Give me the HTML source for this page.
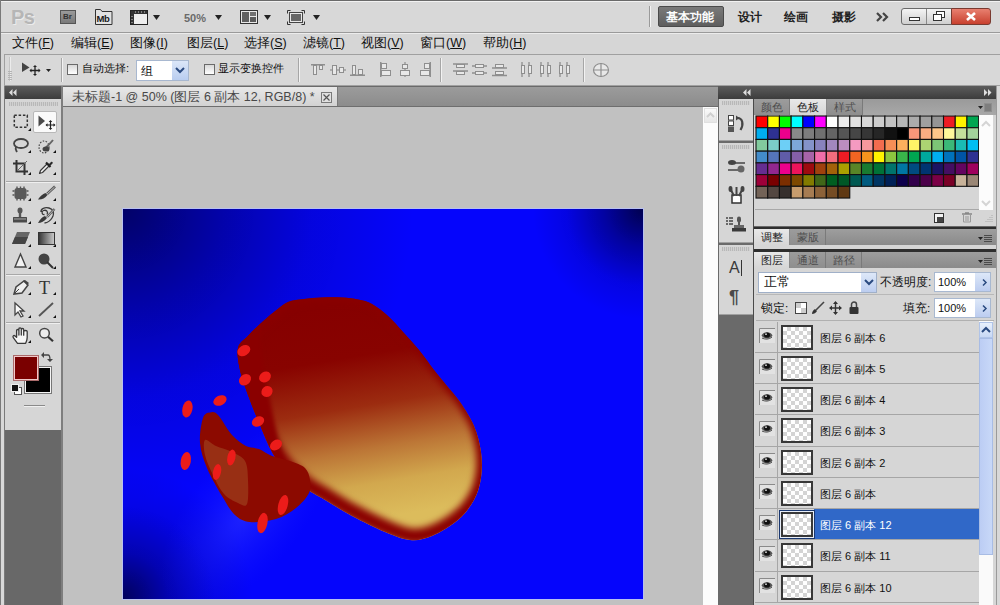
<!DOCTYPE html>
<html><head><meta charset="utf-8">
<style>
*{box-sizing:border-box}
html,body{margin:0;padding:0;width:1000px;height:605px;overflow:hidden;background:#d6d6d6;font-family:"Liberation Sans",sans-serif;font-size:12px;color:#1a1a1a}
.a{position:absolute}
.t{position:absolute;white-space:nowrap;line-height:1}
.hdr{background:linear-gradient(#5c5c5c,#3c3c3c)}
.grip{position:absolute;height:4px;background:repeating-linear-gradient(90deg,#b8b8b8 0 1px,#d0d0d0 1px 2px)}
.tri{position:absolute;width:0;height:0;border-left:3px solid transparent;border-bottom:3px solid #111}
svg{position:absolute;overflow:visible}
</style></head><body>

<div class="a" style="left:0;top:0;width:1000px;height:1px;background:#6a6a6a"></div>
<div class="a" style="left:0;top:0;width:1px;height:605px;background:#7a7a7a"></div>
<div class="a" style="left:1px;top:1px;width:999px;height:1px;background:#f2f2f2"></div>
<div class="a" style="left:1px;top:2px;width:999px;height:30px;background:#d8d8d8"></div>
<div class="a" style="left:1px;top:32px;width:999px;height:1px;background:#9a9a9a"></div>
<div class="a" style="left:1px;top:33px;width:999px;height:1px;background:#ececec"></div>
<div class="t" style="left:11px;top:7px;font-size:20px;font-weight:bold;color:#b6b6b6;letter-spacing:-0.5px;text-shadow:1px 1px 0 #ececec">Ps</div>
<div class="a" style="left:60px;top:10px;width:16px;height:14px;background:linear-gradient(#9a9a9a,#7a7a7a);border:1px solid #555"></div>
<div class="t" style="left:63px;top:13px;font-size:8px;font-weight:bold;color:#333">Br</div>
<svg style="left:95px;top:9px" width="18" height="16"><path d="M0.5 0.5 h5 l1.5 2 h10 v13 h-16.5 z" fill="#e2e2e2" stroke="#333"/></svg>
<div class="t" style="left:96.5px;top:14px;font-size:9.5px;font-weight:bold;color:#1a1a1a;letter-spacing:-0.3px">Mb</div>
<svg style="left:130px;top:10px" width="18" height="15"><rect x="0.5" y="0.5" width="17" height="14" fill="#eee" stroke="#222"/><rect x="1" y="1" width="16" height="3" fill="#333"/><rect x="1" y="1" width="3" height="13" fill="#333"/><path d="M5 2h1M8 2h1M11 2h1M14 2h1M2 6v1M2 9v1M2 12v1" stroke="#ccc"/></svg>
<svg style="left:153px;top:15px" width="8" height="5"><path d="M0 0h7l-3.5 5z" fill="#222"/></svg>
<div class="t" style="left:184px;top:13px;font-size:11px;font-weight:bold;color:#6a6a6a">50%</div>
<svg style="left:215px;top:15px" width="8" height="5"><path d="M0 0h7l-3.5 5z" fill="#222"/></svg>
<svg style="left:240px;top:10px" width="18" height="14"><rect x="0.5" y="0.5" width="17" height="13" fill="#e8e8e8" stroke="#333"/><rect x="2" y="2" width="7" height="10" fill="#606060"/><rect x="10" y="2" width="6" height="4" fill="#707070"/><rect x="10" y="7" width="6" height="5" fill="#5a5a5a"/></svg>
<svg style="left:264px;top:15px" width="8" height="5"><path d="M0 0h7l-3.5 5z" fill="#222"/></svg>
<svg style="left:287px;top:10px" width="18" height="15"><rect x="2.5" y="2.5" width="13" height="10" fill="#e8e8e8" stroke="#444"/><rect x="4" y="4" width="10" height="7" fill="#666"/><path d="M0.5 3.5v-3h3M14.5 0.5h3v3M17.5 11.5v3h-3M3.5 14.5h-3v-3" stroke="#333" fill="none"/></svg>
<svg style="left:313px;top:15px" width="8" height="5"><path d="M0 0h7l-3.5 5z" fill="#222"/></svg>
<div class="a" style="left:649px;top:6px;width:1px;height:21px;background:#9a9a9a"></div>
<div class="a" style="left:650px;top:6px;width:1px;height:21px;background:#f4f4f4"></div>
<div class="a" style="left:658px;top:6px;width:66px;height:21px;background:linear-gradient(#7a7a7a,#5e5e5e);border:1px solid #4a4a4a;border-radius:2px"></div>
<div class="t" style="left:666px;top:11px;font-size:12px;font-weight:bold;color:#fff">基本功能</div>
<div class="t" style="left:738px;top:11px;font-size:12px;font-weight:bold;color:#222">设计</div>
<div class="t" style="left:784px;top:11px;font-size:12px;font-weight:bold;color:#222">绘画</div>
<div class="t" style="left:832px;top:11px;font-size:12px;font-weight:bold;color:#222">摄影</div>
<svg style="left:876px;top:12px" width="14" height="10"><path d="M1 1l4 4l-4 4M7 1l4 4l-4 4" stroke="#444" stroke-width="2.2" fill="none"/></svg>
<div class="a" style="left:901px;top:8px;width:51px;height:17px;background:linear-gradient(#f4f4f4,#cfcfcf);border:1px solid #6a6a6a;border-radius:3px 0 0 3px"></div>
<div class="a" style="left:926px;top:9px;width:1px;height:15px;background:#8a8a8a"></div>
<div class="a" style="left:909px;top:17px;width:11px;height:4px;border:1px solid #333;background:#fff"></div>
<svg style="left:932px;top:10px" width="14" height="12"><rect x="4.5" y="1.5" width="8" height="6" fill="#fff" stroke="#333"/><rect x="1.5" y="4.5" width="8" height="6" fill="#fff" stroke="#333"/></svg>
<div class="a" style="left:951px;top:8px;width:40px;height:17px;background:linear-gradient(#e88070,#c8402e);border:1px solid #7a3a30;border-radius:0 3px 3px 0"></div>
<svg style="left:965px;top:11px" width="12" height="11"><path d="M2 2l8 7M10 2l-8 7" stroke="#fff" stroke-width="2.6"/></svg>
<div class="t" style="left:12px;top:37px;font-size:12.5px;color:#111">文件(<span style="text-decoration:underline">F</span>)</div>
<div class="t" style="left:71px;top:37px;font-size:12.5px;color:#111">编辑(<span style="text-decoration:underline">E</span>)</div>
<div class="t" style="left:130px;top:37px;font-size:12.5px;color:#111">图像(<span style="text-decoration:underline">I</span>)</div>
<div class="t" style="left:187px;top:37px;font-size:12.5px;color:#111">图层(<span style="text-decoration:underline">L</span>)</div>
<div class="t" style="left:244px;top:37px;font-size:12.5px;color:#111">选择(<span style="text-decoration:underline">S</span>)</div>
<div class="t" style="left:303px;top:37px;font-size:12.5px;color:#111">滤镜(<span style="text-decoration:underline">T</span>)</div>
<div class="t" style="left:361px;top:37px;font-size:12.5px;color:#111">视图(<span style="text-decoration:underline">V</span>)</div>
<div class="t" style="left:420px;top:37px;font-size:12.5px;color:#111">窗口(<span style="text-decoration:underline">W</span>)</div>
<div class="t" style="left:483px;top:37px;font-size:12.5px;color:#111">帮助(<span style="text-decoration:underline">H</span>)</div>
<div class="a" style="left:4px;top:54px;width:996px;height:32px;background:#d8d8d8;border:1px solid #a0a0a0;border-right:none"></div>
<div class="a" style="left:9px;top:57px;width:1px;height:24px;background:#c4c4c4"></div><div class="a" style="left:10px;top:57px;width:1px;height:24px;background:#ececec"></div>
<div class="a" style="left:8px;top:71px;width:4px;height:9px;background:repeating-linear-gradient(#b4b4b4 0 1px,transparent 1px 2px)"></div>
<svg style="left:22px;top:62px" width="20" height="15"><path d="M0 0.5v9.5l7.5-4.5z" fill="#444"/><path d="M8.5 8.5h9M13 4v9" stroke="#222" stroke-width="1.3"/><path d="M13 3l-2 2h4zM13 14l-2-2h4zM7.5 8.5l2-2v4zM18.5 8.5l-2-2v4z" fill="#222"/></svg>
<svg style="left:46px;top:69px" width="6" height="4"><path d="M0 0h5l-2.5 3z" fill="#222"/></svg>
<div class="a" style="left:61px;top:58px;width:1px;height:24px;background:#a6a6a6"></div>
<div class="a" style="left:62px;top:58px;width:1px;height:24px;background:#f2f2f2"></div>
<div class="a" style="left:298px;top:58px;width:1px;height:24px;background:#a6a6a6"></div>
<div class="a" style="left:299px;top:58px;width:1px;height:24px;background:#f2f2f2"></div>
<div class="a" style="left:440px;top:58px;width:1px;height:24px;background:#a6a6a6"></div>
<div class="a" style="left:441px;top:58px;width:1px;height:24px;background:#f2f2f2"></div>
<div class="a" style="left:583px;top:58px;width:1px;height:24px;background:#a6a6a6"></div>
<div class="a" style="left:584px;top:58px;width:1px;height:24px;background:#f2f2f2"></div>
<div class="a" style="left:67px;top:64px;width:11px;height:11px;border:1px solid #6a6a6a;background:linear-gradient(#d8d8d8,#fff)"></div>
<div class="t" style="left:82px;top:63px;font-size:11.2px;color:#111">自动选择:</div>
<div class="a" style="left:136px;top:60px;width:53px;height:21px;background:#fff;border:1px solid #a8b8d0"></div>
<div class="t" style="left:141px;top:65px;font-size:12px;color:#111">组</div>
<div class="a" style="left:172px;top:61px;width:16px;height:19px;background:linear-gradient(#dbe6f8,#b9cdf0)"></div>
<svg style="left:175px;top:67px" width="10" height="7"><path d="M1 1l4 4l4-4" stroke="#2a4a80" stroke-width="2" fill="none"/></svg>
<div class="a" style="left:204px;top:64px;width:11px;height:11px;border:1px solid #6a6a6a;background:linear-gradient(#d8d8d8,#fff)"></div>
<div class="t" style="left:218px;top:63px;font-size:11.2px;color:#111">显示变换控件</div>
<svg style="left:311px;top:64px" width="16" height="12"><path d="M0 0.75h14" stroke="#8e8e8e" stroke-width="1.5"/><rect x="2.5" y="1.5" width="3" height="9" fill="#e8e8e8" stroke="#8e8e8e"/><rect x="8.5" y="1.5" width="3" height="4" fill="#e8e8e8" stroke="#8e8e8e"/></svg>
<svg style="left:330px;top:64px" width="16" height="12"><path d="M0 6h16" stroke="#8e8e8e" stroke-width="1.2"/><rect x="2.5" y="1.5" width="4" height="9" fill="#e8e8e8" stroke="#8e8e8e"/><rect x="9.5" y="3.5" width="4" height="5" fill="#e8e8e8" stroke="#8e8e8e"/></svg>
<svg style="left:350px;top:64px" width="16" height="12"><path d="M0 11.25h15" stroke="#8e8e8e" stroke-width="1.5"/><rect x="2.5" y="1.5" width="3" height="9" fill="#e8e8e8" stroke="#8e8e8e"/><rect x="8.5" y="5.5" width="4" height="5" fill="#e8e8e8" stroke="#8e8e8e"/></svg>
<svg style="left:380px;top:62px" width="12" height="15"><path d="M0.75 0v15" stroke="#8e8e8e" stroke-width="1.5"/><rect x="1.5" y="1.5" width="5" height="5" fill="#e8e8e8" stroke="#8e8e8e"/><rect x="1.5" y="8.5" width="9" height="5" fill="#e8e8e8" stroke="#8e8e8e"/></svg>
<svg style="left:399px;top:62px" width="12" height="15"><path d="M6 0v15" stroke="#8e8e8e" stroke-width="1.2"/><rect x="3.5" y="2.5" width="5" height="4" fill="#e8e8e8" stroke="#8e8e8e"/><rect x="1.5" y="8.5" width="9" height="5" fill="#e8e8e8" stroke="#8e8e8e"/></svg>
<svg style="left:419px;top:62px" width="12" height="15"><path d="M11.25 0v15" stroke="#8e8e8e" stroke-width="1.5"/><rect x="5.5" y="1.5" width="5" height="5" fill="#e8e8e8" stroke="#8e8e8e"/><rect x="1.5" y="8.5" width="9" height="5" fill="#e8e8e8" stroke="#8e8e8e"/></svg>
<svg style="left:453px;top:63px" width="16" height="14"><path d="M0 1h15M0 8h15" stroke="#8e8e8e" stroke-width="1.3"/><rect x="3.5" y="1.5" width="8" height="3" fill="#e8e8e8" stroke="#8e8e8e"/><rect x="3.5" y="8.5" width="8" height="3" fill="#e8e8e8" stroke="#8e8e8e"/></svg>
<svg style="left:472px;top:63px" width="16" height="14"><path d="M0 3h15M0 10h15" stroke="#8e8e8e" stroke-width="1.3"/><rect x="3.5" y="1.5" width="8" height="3" fill="#e8e8e8" stroke="#8e8e8e"/><rect x="3.5" y="8.5" width="8" height="3" fill="#e8e8e8" stroke="#8e8e8e"/></svg>
<svg style="left:492px;top:63px" width="16" height="14"><path d="M0 5h15M0 12.5h15" stroke="#8e8e8e" stroke-width="1.3"/><rect x="3.5" y="1.5" width="8" height="3" fill="#e8e8e8" stroke="#8e8e8e"/><rect x="3.5" y="8.5" width="8" height="3" fill="#e8e8e8" stroke="#8e8e8e"/></svg>
<svg style="left:520px;top:62px" width="14" height="16"><path d="M2 0v15M9 0v15" stroke="#8e8e8e" stroke-width="1.3"/><rect x="1.5" y="3.5" width="3" height="8" fill="#e8e8e8" stroke="#8e8e8e"/><rect x="8.5" y="3.5" width="3" height="8" fill="#e8e8e8" stroke="#8e8e8e"/></svg>
<svg style="left:539px;top:62px" width="14" height="16"><path d="M2 0v15M9 0v15" stroke="#8e8e8e" stroke-width="1.3"/><rect x="1.5" y="3.5" width="3" height="8" fill="#e8e8e8" stroke="#8e8e8e"/><rect x="8.5" y="3.5" width="3" height="8" fill="#e8e8e8" stroke="#8e8e8e"/></svg>
<svg style="left:558px;top:62px" width="14" height="16"><path d="M2 0v15M9 0v15" stroke="#8e8e8e" stroke-width="1.3"/><rect x="1.5" y="3.5" width="3" height="8" fill="#e8e8e8" stroke="#8e8e8e"/><rect x="8.5" y="3.5" width="3" height="8" fill="#e8e8e8" stroke="#8e8e8e"/></svg>
<svg style="left:592px;top:62px" width="18" height="16"><ellipse cx="9" cy="8" rx="7.5" ry="6.5" fill="#e8e8e8" stroke="#8e8e8e" stroke-width="1.2"/><path d="M9 1v14M2 8h14" stroke="#8e8e8e" stroke-width="1.2"/></svg>
<div class="a" style="left:1px;top:86px;width:3px;height:519px;background:#d8d8d8"></div>
<div class="a" style="left:4px;top:86px;width:1px;height:519px;background:#7a7a7a"></div>
<div class="a hdr" style="left:5px;top:86px;width:57px;height:13px"></div>
<svg style="left:9px;top:89px" width="8" height="7"><path d="M3.5 0v7L0 3.5zM7.5 0v7L4 3.5z" fill="#ddd"/></svg>
<div class="a" style="left:5px;top:99px;width:56px;height:331px;background:#d6d6d6"></div>
<div class="a" style="left:5px;top:430px;width:56px;height:175px;background:#686868"></div>
<div class="a" style="left:61px;top:86px;width:2px;height:519px;background:#7e7e7e"></div>
<div class="grip" style="left:9px;top:102px;width:49px"></div>
<div class="a" style="left:6px;top:181px;width:54px;height:1px;background:#a8a8a8"></div>
<div class="a" style="left:6px;top:182px;width:54px;height:1px;background:#efefef"></div>
<div class="a" style="left:6px;top:274px;width:54px;height:1px;background:#a8a8a8"></div>
<div class="a" style="left:6px;top:275px;width:54px;height:1px;background:#efefef"></div>
<div class="a" style="left:6px;top:322px;width:54px;height:1px;background:#a8a8a8"></div>
<div class="a" style="left:6px;top:323px;width:54px;height:1px;background:#efefef"></div>
<div class="a" style="left:33px;top:111px;width:24px;height:22px;background:#fafafa;border:1px solid #b8b8b8;border-radius:2px"></div>
<svg style="left:13px;top:114px" width="16" height="15"><rect x="1.3" y="1.3" width="13" height="12" fill="none" stroke="#333" stroke-width="1.5" stroke-dasharray="2.5 1.8"/></svg>
<svg style="left:38px;top:115px" width="17" height="15"><path d="M0.5 0.5v11l6.5-5.5z" fill="#4a4a4a"/><path d="M8.5 10h8M12.5 6v8" stroke="#222" stroke-width="1.2"/><path d="M12.5 5l-1.8 2h3.6zM12.5 15l-1.8-2h3.6zM7.5 10l2-1.8v3.6zM17.5 10l-2-1.8v3.6z" fill="#222"/></svg>
<svg style="left:12px;top:138px" width="17" height="15"><ellipse cx="9" cy="5.5" rx="7" ry="4.5" fill="none" stroke="#444" stroke-width="1.8"/><path d="M4 9c-1 2 0 3 1 5" stroke="#444" stroke-width="1.8" fill="none"/></svg>
<svg style="left:38px;top:138px" width="17" height="16"><ellipse cx="6" cy="9" rx="5" ry="6" fill="none" stroke="#444" stroke-width="1.2" stroke-dasharray="1.5 1.5"/><path d="M6 12c2-3 5-5 9-10" stroke="#666" stroke-width="2"/><ellipse cx="8" cy="11" rx="3.5" ry="2.5" fill="#444"/></svg>
<svg style="left:13px;top:160px" width="15" height="15"><path d="M3.5 0v11.5h11.5M0 3.5h11.5v11.5" stroke="#333" stroke-width="2" fill="none"/><path d="M4 11l10-10" stroke="#666" stroke-width="1"/></svg>
<svg style="left:38px;top:159px" width="16" height="16"><path d="M1.5 14.5l1-3l7-7l2 2l-7 7z" fill="#f4f4f4" stroke="#3a3a3a" stroke-width="1.2" stroke-linejoin="round"/><path d="M8 3.5l4.5 4.5" stroke="#222" stroke-width="2.2"/><path d="M10.5 5.5l2.5-2.5c1-1 2.5 0.5 1.5 1.5l-2.5 2.5z" fill="#2a2a2a"/></svg>
<svg style="left:12px;top:186px" width="17" height="15"><rect x="2.5" y="2" width="12" height="11" rx="2.5" fill="#5a5a5a"/><path d="M5 0.5v2M8.5 0.5v2M12 0.5v2M5 12.5v2M8.5 12.5v2M12 12.5v2M0.5 5h2M0.5 9h2M14.5 5h2M14.5 9h2" stroke="#555" stroke-width="1.4"/></svg>
<svg style="left:37px;top:186px" width="19" height="15"><path d="M18 0.5l-8 7.5" stroke="#555" stroke-width="2.6"/><path d="M17.6 1l-7.5 7" stroke="#ddd" stroke-width="0.8"/><path d="M1 13.5c3 0.5 7-1 9.5-4.5l-2-2c-3 1-5.5 3.5-7.5 6.5z" fill="#3a3a3a"/></svg>
<svg style="left:12px;top:207px" width="17" height="17"><ellipse cx="8" cy="3.5" rx="2.5" ry="3" fill="#555"/><rect x="6.8" y="5" width="2.4" height="5" fill="#555"/><rect x="1" y="10" width="14" height="5.5" rx="0.5" fill="#4a4a4a"/><rect x="2" y="11.2" width="12" height="1.5" fill="#888"/></svg>
<svg style="left:37px;top:207px" width="19" height="17"><path d="M7.5 7.5c-2.5 0.5-3.5-3-1-4c3-1 5 1.5 3.5 4M4 5c-0.5-3.5 4-5 8-4c4 1 6 5 3 10c-1.5 2.5-4 4.5-7.5 5" stroke="#3a3a3a" stroke-width="1.3" fill="none"/><path d="M17.5 2l-7.5 8" stroke="#555" stroke-width="2.4"/><path d="M17.2 2.4l-7 7.5" stroke="#ddd" stroke-width="0.7"/><path d="M1 16c3 0 6.5-1.5 9-5l-2-2c-3 1-5 3.5-7 7z" fill="#3a3a3a"/></svg>
<svg style="left:12px;top:232px" width="18" height="13"><path d="M5 0h13l-5 12h-13z" fill="#666"/><path d="M0 12l3-7h13l-3 7z" fill="#444"/></svg>
<svg style="left:38px;top:232px" width="17" height="13"><defs><linearGradient id="gg"><stop offset="0" stop-color="#333"/><stop offset="1" stop-color="#ccc"/></linearGradient></defs><rect x="0.5" y="0.5" width="16" height="12" fill="url(#gg)" stroke="#333"/></svg>
<svg style="left:13px;top:253px" width="15" height="15"><path d="M7.5 1L2 14h11z" fill="#f2f2f2" stroke="#444" stroke-width="1.4"/></svg>
<svg style="left:38px;top:253px" width="17" height="15"><circle cx="6" cy="6" r="5.5" fill="#444"/><path d="M9 9l6 6" stroke="#333" stroke-width="2"/></svg>
<svg style="left:13px;top:280px" width="16" height="15"><path d="M1 14l2-7l8-6l4 4l-6 8z" fill="#eee" stroke="#444" stroke-width="1.5"/><path d="M1 14l5-5" stroke="#444"/><path d="M10 1l4 4l2-2l-4-3z" fill="#444"/></svg>
<div class="t" style="left:39px;top:279px;font-family:'Liberation Serif',serif;font-size:18px;color:#333">T</div>
<svg style="left:14px;top:302px" width="12" height="15"><path d="M1 1v12l3-3l3 5l2-1l-3-5h4z" fill="#fafafa" stroke="#444" stroke-width="1.3"/></svg>
<svg style="left:38px;top:302px" width="16" height="15"><path d="M1 14l14-13" stroke="#555" stroke-width="1.8"/></svg>
<svg style="left:11.5px;top:327px" width="18" height="17"><path d="M5.5 16.3 L1.3 10.6 C0.4 9.5 1.6 7.8 3.1 8.9 L4.6 10.3 L4.6 3.6 C4.6 2.1 6.9 2.1 6.9 3.6 L6.9 8 L6.9 1.9 C6.9 0.4 9.3 0.4 9.3 1.9 L9.3 8 L9.3 2.6 C9.3 1.1 11.7 1.1 11.7 2.6 L11.7 8.2 L11.7 4.6 C11.7 3.1 15.2 3.1 15.2 4.6 L15.2 10.5 C15.2 13 14.2 14.8 13.6 16.3 Z" fill="#f6f6f6" stroke="#3a3a3a" stroke-width="1.3" stroke-linejoin="round"/></svg>
<svg style="left:38px;top:327px" width="16" height="16"><circle cx="6.5" cy="6.2" r="4.8" fill="#ececec" stroke="#444" stroke-width="1.5"/><path d="M10 9.8l5 4.5" stroke="#333" stroke-width="2.2"/></svg>
<div class="tri" style="left:28px;top:128px"></div>
<div class="tri" style="left:53px;top:150px"></div>
<div class="tri" style="left:28px;top:150px"></div>
<div class="tri" style="left:28px;top:172px"></div>
<div class="tri" style="left:53px;top:172px"></div>
<div class="tri" style="left:28px;top:198px"></div>
<div class="tri" style="left:53px;top:198px"></div>
<div class="tri" style="left:28px;top:221px"></div>
<div class="tri" style="left:53px;top:221px"></div>
<div class="tri" style="left:28px;top:244px"></div>
<div class="tri" style="left:53px;top:244px"></div>
<div class="tri" style="left:28px;top:266px"></div>
<div class="tri" style="left:53px;top:266px"></div>
<div class="tri" style="left:28px;top:292px"></div>
<div class="tri" style="left:53px;top:292px"></div>
<div class="tri" style="left:28px;top:315px"></div>
<div class="tri" style="left:53px;top:315px"></div>
<div class="tri" style="left:28px;top:340px"></div>
<div class="a" style="left:25px;top:367px;width:26px;height:26px;background:#000;border:1px solid #f4f4f4;outline:1px solid #777"></div>
<div class="a" style="left:14px;top:356px;width:24px;height:24px;background:#7a0000;border:1px solid #f0c8c8;outline:1px solid #aa6a6a"></div>
<svg style="left:41px;top:352px" width="11" height="10"><path d="M2 3h5c2 0 2 2 2 5" stroke="#444" stroke-width="1.3" fill="none"/><path d="M0 3l3-3v6zM9 10l-3-3h6z" fill="#444"/></svg>
<div class="a" style="left:14px;top:387px;width:8px;height:8px;background:#fff;border:1px solid #555"></div>
<div class="a" style="left:11px;top:384px;width:8px;height:8px;background:#111;border:1px solid #eee"></div>
<div class="a" style="left:24px;top:405px;width:21px;height:1px;background:#8a8a8a"></div>
<div class="a" style="left:24px;top:406px;width:21px;height:1px;background:#f0f0f0"></div>
<div class="a" style="left:63px;top:86px;width:655px;height:20px;background:linear-gradient(#9c9c9c,#8c8c8c)"></div>
<div class="a" style="left:63px;top:86px;width:655px;height:1px;background:#6a6a6a"></div>
<div class="a" style="left:63px;top:87px;width:275px;height:19px;background:linear-gradient(#e8e8e8,#d2d2d2);border-right:1px solid #7a7a7a"></div>
<div class="t" style="left:72px;top:91px;font-size:12.5px;color:#484848">未标题-1 @ 50% (图层 6 副本 12, RGB/8) *</div>
<div class="a" style="left:321px;top:92px;width:11px;height:11px;border:1px solid #7a7a7a;background:#e0e0e0"></div>
<svg style="left:323px;top:94px" width="7" height="7"><path d="M0.5 0.5l6 6M6.5 0.5l-6 6" stroke="#555" stroke-width="1.2"/></svg>
<div class="a" style="left:63px;top:106px;width:655px;height:1px;background:#6e6e6e"></div>
<div class="a" style="left:63px;top:107px;width:640px;height:498px;background:#c1c1c1"></div>
<div class="a" style="left:703px;top:107px;width:15px;height:498px;background:#fcfcfc"></div>
<div class="a" style="left:704px;top:108px;width:13px;height:15px;background:linear-gradient(#fafafa,#e6e6e6);border:1px solid #e0e0e0"></div>
<svg style="left:706px;top:112px" width="9" height="6"><path d="M1 5l3.5-3.5l3.5 3.5" stroke="#d0d0d0" stroke-width="2" fill="none"/></svg>
<div class="a" style="left:122px;top:208px;width:522px;height:392px;background:#b8c0f0"></div>
<svg style="left:123px;top:209px" width="520" height="390" viewBox="123 209 520 390">
<defs>
<radialGradient id="cTL" gradientUnits="userSpaceOnUse" cx="123" cy="209" r="290"><stop offset="0" stop-color="#000028" stop-opacity="0.7"/><stop offset="0.35" stop-color="#000028" stop-opacity="0.38"/><stop offset="0.65" stop-color="#000028" stop-opacity="0.14"/><stop offset="1" stop-color="#000028" stop-opacity="0"/></radialGradient>
<radialGradient id="cTR" gradientUnits="userSpaceOnUse" cx="643" cy="209" r="110"><stop offset="0" stop-color="#000030" stop-opacity="0.85"/><stop offset="0.35" stop-color="#000030" stop-opacity="0.45"/><stop offset="0.7" stop-color="#000030" stop-opacity="0.12"/><stop offset="1" stop-color="#000030" stop-opacity="0"/></radialGradient>
<radialGradient id="cBL" gradientUnits="userSpaceOnUse" cx="123" cy="598" r="130"><stop offset="0" stop-color="#000028" stop-opacity="0.75"/><stop offset="0.35" stop-color="#000028" stop-opacity="0.35"/><stop offset="0.7" stop-color="#000028" stop-opacity="0.1"/><stop offset="1" stop-color="#000028" stop-opacity="0"/></radialGradient>
<radialGradient id="glow" gradientUnits="userSpaceOnUse" cx="245" cy="515" r="75" gradientTransform="translate(245 515) rotate(-50) scale(1.5 0.75) translate(-245 -515)">
<stop offset="0" stop-color="#5868ff" stop-opacity="0.3"/><stop offset="1" stop-color="#2030ff" stop-opacity="0"/>
</radialGradient>
<linearGradient id="egg" gradientUnits="userSpaceOnUse" x1="362" y1="300" x2="398" y2="515">
<stop offset="0" stop-color="#860000"/><stop offset="0.25" stop-color="#880300"/><stop offset="0.48" stop-color="#9c2c10"/><stop offset="0.68" stop-color="#bc7636"/><stop offset="0.84" stop-color="#d2a84e"/><stop offset="1" stop-color="#dcbc5c"/>
</linearGradient>
<clipPath id="ec"><path d="M238 348 C239.3 342.3 244.3 340.0 248 336 C251.7 332.0 255.7 328.0 260 324 C264.3 320.0 269.3 315.7 274 312 C278.7 308.3 283.0 304.2 288 302 C293.0 299.8 298.3 299.8 304 299 C309.7 298.2 315.7 297.8 322 297.5 C328.3 297.2 336.0 297.2 342 297.5 C348.0 297.8 353.0 298.4 358 299.5 C363.0 300.6 367.0 301.2 372 304 C377.0 306.8 382.8 311.3 388 316 C393.2 320.7 397.8 326.3 403 332 C408.2 337.7 413.8 343.7 419 350 C424.2 356.3 429.3 364.0 434 370 C438.7 376.0 442.7 380.7 447 386 C451.3 391.3 455.5 395.3 460 402 C464.5 408.7 470.5 417.7 474 426 C477.5 434.3 479.8 443.3 481 452 C482.2 460.7 482.2 470.0 481 478 C479.8 486.0 477.8 493.0 474 500 C470.2 507.0 465.0 514.0 458 520 C451.0 526.0 440.0 532.7 432 536 C424.0 539.3 417.8 540.7 410 540 C402.2 539.3 394.7 536.0 385 532 C375.3 528.0 362.0 521.3 352 516 C342.0 510.7 332.8 504.7 325 500 C317.2 495.3 311.7 493.0 305 488 C298.3 483.0 290.5 476.0 285 470 C279.5 464.0 276.2 459.5 272 452 C267.8 444.5 264.0 434.5 260 425 C256.0 415.5 251.3 404.2 248 395 C244.7 385.8 241.7 377.8 240 370 C238.3 362.2 236.7 353.7 238 348 Z"/></clipPath>
<filter id="bl" x="-20%" y="-20%" width="140%" height="140%"><feGaussianBlur stdDeviation="3.5"/></filter><filter id="bl2" x="-20%" y="-20%" width="140%" height="140%"><feGaussianBlur stdDeviation="2"/></filter>
</defs>
<rect x="123" y="209" width="520" height="390" fill="#0505fc"/><rect x="123" y="209" width="520" height="390" fill="url(#cTL)"/><rect x="123" y="209" width="520" height="390" fill="url(#cTR)"/><rect x="123" y="209" width="520" height="390" fill="url(#cBL)"/>
<rect x="123" y="209" width="520" height="390" fill="url(#glow)"/>
<g clip-path="url(#ec)">
<rect x="230" y="290" width="260" height="260" fill="url(#egg)"/>
<path d="M238 348 C239.3 342.3 244.3 340.0 248 336 C251.7 332.0 255.7 328.0 260 324 C264.3 320.0 269.3 315.7 274 312 C278.7 308.3 283.0 304.2 288 302 C293.0 299.8 298.3 299.8 304 299 C309.7 298.2 315.7 297.8 322 297.5 C328.3 297.2 336.0 297.2 342 297.5 C348.0 297.8 353.0 298.4 358 299.5 C363.0 300.6 367.0 301.2 372 304 C377.0 306.8 382.8 311.3 388 316 C393.2 320.7 397.8 326.3 403 332 C408.2 337.7 413.8 343.7 419 350 C424.2 356.3 429.3 364.0 434 370 C438.7 376.0 442.7 380.7 447 386 C451.3 391.3 455.5 395.3 460 402 C464.5 408.7 470.5 417.7 474 426 C477.5 434.3 479.8 443.3 481 452 C482.2 460.7 482.2 470.0 481 478 C479.8 486.0 477.8 493.0 474 500 C470.2 507.0 465.0 514.0 458 520 C451.0 526.0 440.0 532.7 432 536 C424.0 539.3 417.8 540.7 410 540 C402.2 539.3 394.7 536.0 385 532 C375.3 528.0 362.0 521.3 352 516 C342.0 510.7 332.8 504.7 325 500 C317.2 495.3 311.7 493.0 305 488 C298.3 483.0 290.5 476.0 285 470 C279.5 464.0 276.2 459.5 272 452 C267.8 444.5 264.0 434.5 260 425 C256.0 415.5 251.3 404.2 248 395 C244.7 385.8 241.7 377.8 240 370 C238.3 362.2 236.7 353.7 238 348 Z" fill="none" stroke="#8a0600" stroke-width="15" filter="url(#bl)" transform="translate(2 -4)"/>
<path d="M230 330 L258 326 C262 360 266 385 270 400 C274 420 276 440 284 462 L300 520 L230 520 Z" fill="#8a0600" filter="url(#bl2)"/>
</g>
<path d="M203 418 C204.7 412.9 207.5 413.0 210 412.5 C212.5 412.0 214.3 411.2 218 415 C221.7 418.8 227.3 429.8 232 435 C236.7 440.2 241.5 443.7 246 446 C250.5 448.3 254.7 447.3 259 449 C263.3 450.7 266.8 454.0 272 456 C277.2 458.0 284.5 459.0 290 461 C295.5 463.0 301.7 464.8 305 468 C308.3 471.2 309.3 475.8 310 480 C310.7 484.2 311.3 488.3 309 493 C306.7 497.7 301.5 503.7 296 508 C290.5 512.3 283.7 516.7 276 519 C268.3 521.3 256.8 522.7 250 522 C243.2 521.3 239.7 519.3 235 515 C230.3 510.7 226.7 503.8 222 496 C217.3 488.2 210.7 476.8 207 468 C203.3 459.2 200.7 451.3 200 443 C199.3 434.7 201.3 423.1 203 418 Z" fill="#8c0a00"/>
<path d="M205 440 C206.8 438.5 211.5 444.0 216 446 C220.5 448.0 227.2 449.5 232 452 C236.8 454.5 242.3 456.3 245 461 C247.7 465.7 247.7 472.8 248 480 C248.3 487.2 248.7 500.2 247 504 C245.3 507.8 241.8 504.7 238 503 C234.2 501.3 228.2 498.7 224 494 C219.8 489.3 216.2 481.5 213 475 C209.8 468.5 206.3 460.8 205 455 C203.7 449.2 203.2 441.5 205 440 Z" fill="#9a3618" opacity="0.85"/>
<ellipse cx="243.8" cy="350.6" rx="6.94" ry="5.06" transform="rotate(-30 243.8 350.6)" fill="#ec1c1a"/><ellipse cx="245" cy="379.7" rx="6.50" ry="5.29" transform="rotate(-40 245 379.7)" fill="#ec1c1a"/><ellipse cx="265" cy="377" rx="6.27" ry="5.06" transform="rotate(-35 265 377)" fill="#ec1c1a"/><ellipse cx="267" cy="391.6" rx="5.82" ry="5.29" transform="rotate(-40 267 391.6)" fill="#ec1c1a"/><ellipse cx="220" cy="400.5" rx="6.94" ry="4.83" transform="rotate(-25 220 400.5)" fill="#ec1c1a"/><ellipse cx="187.4" cy="409" rx="5.04" ry="8.62" transform="rotate(12 187.4 409)" fill="#ec1c1a"/><ellipse cx="258" cy="421.5" rx="6.50" ry="4.83" transform="rotate(-30 258 421.5)" fill="#ec1c1a"/><ellipse cx="276" cy="445" rx="6.50" ry="4.83" transform="rotate(-35 276 445)" fill="#ec1c1a"/><ellipse cx="185.8" cy="461" rx="5.04" ry="9.20" transform="rotate(10 185.8 461)" fill="#ec1c1a"/><ellipse cx="231.4" cy="457.5" rx="4.03" ry="8.05" transform="rotate(12 231.4 457.5)" fill="#ec1c1a"/><ellipse cx="217" cy="472" rx="4.03" ry="8.05" transform="rotate(12 217 472)" fill="#ec1c1a"/><ellipse cx="283" cy="505" rx="4.70" ry="10.35" transform="rotate(15 283 505)" fill="#ec1c1a"/><ellipse cx="262.5" cy="523" rx="4.93" ry="10.35" transform="rotate(12 262.5 523)" fill="#ec1c1a"/>
</svg>
<div class="a" style="left:718px;top:86px;width:282px;height:519px;background:#6a6a6a"></div>
<div class="a hdr" style="left:718px;top:86px;width:278px;height:13px"></div>
<div class="a" style="left:996px;top:86px;width:4px;height:519px;background:#d8d8d8;border-left:1px solid #9a9a9a"></div>
<svg style="left:743px;top:89px" width="8" height="7"><path d="M3.5 0v7L0 3.5zM7.5 0v7L4 3.5z" fill="#ddd"/></svg>
<svg style="left:984px;top:89px" width="8" height="7"><path d="M0 0v7L3.5 3.5zM4 0v7L7.5 3.5z" fill="#ddd"/></svg>
<div class="a" style="left:719px;top:99px;width:34px;height:42px;background:#d6d6d6;border-bottom:1px solid #a0a0a0"></div>
<div class="grip" style="left:722px;top:101px;width:28px"></div>
<div class="a" style="left:719px;top:143px;width:34px;height:100px;background:#d6d6d6;border-bottom:1px solid #a0a0a0"></div>
<div class="grip" style="left:722px;top:145px;width:28px"></div>
<div class="a" style="left:719px;top:245px;width:34px;height:70px;background:#d6d6d6;border-bottom:1px solid #a0a0a0"></div>
<div class="grip" style="left:722px;top:247px;width:28px"></div>
<svg style="left:728px;top:115px" width="18" height="18"><rect x="0.5" y="0.5" width="5" height="4.5" fill="#fff" stroke="#444"/><rect x="0.5" y="6" width="5" height="4.5" fill="#fff" stroke="#444"/><rect x="0" y="11.5" width="6" height="5.5" fill="#555"/><path d="M9.5 3c5 0 6.5 6 3 12" stroke="#444" stroke-width="2.2" fill="none"/><path d="M8 0.5l3.5 2.5l-3.5 2.5z" fill="#444"/></svg>
<svg style="left:727px;top:160px" width="19" height="12"><path d="M2 3h16" stroke="#444" stroke-width="1.5"/><ellipse cx="5" cy="2.5" rx="4" ry="2.5" fill="#444"/><path d="M1 10h12" stroke="#444" stroke-width="1.5"/><circle cx="14" cy="9" r="3.5" fill="#666"/></svg>
<svg style="left:728px;top:186px" width="17" height="18"><rect x="4" y="9" width="9" height="8" fill="#fff" stroke="#333" stroke-width="1.5"/><path d="M6 10l-4-8M8.5 10v-9M11 10l4-8" stroke="#444" stroke-width="2"/><ellipse cx="2.5" cy="3" rx="2" ry="3" fill="#444"/><ellipse cx="14.5" cy="3" rx="2" ry="3" fill="#444"/></svg>
<svg style="left:726px;top:216px" width="20" height="17"><path d="M0 2h2M3 2h4M0 5h2M3 5h4M0 8h2M3 8h4" stroke="#444" stroke-width="1.3"/><rect x="11" y="0.5" width="4" height="6" rx="2" fill="#555"/><rect x="12" y="6" width="2" height="3" fill="#555"/><rect x="8" y="9" width="10" height="3" fill="#666"/><rect x="6" y="12" width="14" height="3.5" fill="#3a3a3a"/></svg>
<div class="t" style="left:729px;top:260px;font-size:16px;color:#3a3a3a">A</div>
<div class="a" style="left:741px;top:260px;width:1.2px;height:16px;background:#333"></div>
<div class="t" style="left:729px;top:288px;font-size:18px;font-weight:bold;color:#4a4a4a">¶</div>
<div class="a" style="left:753px;top:99px;width:1px;height:506px;background:#4a4a4a"></div>
<div class="a" style="left:754px;top:99px;width:242px;height:127px;background:#d6d6d6"></div>
<div class="a" style="left:754px;top:99px;width:242px;height:16px;background:linear-gradient(#9a9a9a,#a8a8a8)"></div>
<div class="a" style="left:754px;top:99px;width:36px;height:16px;border-right:1px solid #7a7a7a;background:linear-gradient(#9c9c9c,#8e8e8e)"></div>
<div class="t" style="left:761px;top:102px;font-size:11px;color:#4e4e4e">颜色</div>
<div class="a" style="left:790px;top:99px;width:37px;height:16px;background:linear-gradient(#e8e8e8,#d6d6d6);border-right:1px solid #8a8a8a"></div>
<div class="t" style="left:797px;top:102px;font-size:11px;color:#222">色板</div>
<div class="a" style="left:827px;top:99px;width:36px;height:16px;border-right:1px solid #7a7a7a;background:linear-gradient(#9c9c9c,#8e8e8e)"></div>
<div class="t" style="left:834px;top:102px;font-size:11px;color:#4e4e4e">样式</div>
<svg style="left:978px;top:102px" width="14" height="11"><path d="M0 4h5l-2.5 3z" fill="#222"/><rect x="6.5" y="1.5" width="7" height="8" fill="#7e7e7e" stroke="#8e8e8e"/></svg>
<svg style="left:755.7px;top:116px" width="223" height="83"><rect x="0.00" y="0.00" width="11.72" height="11.72" fill="#FF0000" stroke="#111" stroke-width="1.1"/><rect x="11.72" y="0.00" width="11.72" height="11.72" fill="#FFFF00" stroke="#111" stroke-width="1.1"/><rect x="23.44" y="0.00" width="11.72" height="11.72" fill="#00FF00" stroke="#111" stroke-width="1.1"/><rect x="35.16" y="0.00" width="11.72" height="11.72" fill="#00FFFF" stroke="#111" stroke-width="1.1"/><rect x="46.88" y="0.00" width="11.72" height="11.72" fill="#0000FF" stroke="#111" stroke-width="1.1"/><rect x="58.60" y="0.00" width="11.72" height="11.72" fill="#FF00FF" stroke="#111" stroke-width="1.1"/><rect x="70.32" y="0.00" width="11.72" height="11.72" fill="#FFFFFF" stroke="#111" stroke-width="1.1"/><rect x="82.04" y="0.00" width="11.72" height="11.72" fill="#EBEBEB" stroke="#111" stroke-width="1.1"/><rect x="93.76" y="0.00" width="11.72" height="11.72" fill="#E1E1E1" stroke="#111" stroke-width="1.1"/><rect x="105.48" y="0.00" width="11.72" height="11.72" fill="#D7D7D7" stroke="#111" stroke-width="1.1"/><rect x="117.20" y="0.00" width="11.72" height="11.72" fill="#CCCCCC" stroke="#111" stroke-width="1.1"/><rect x="128.92" y="0.00" width="11.72" height="11.72" fill="#C2C2C2" stroke="#111" stroke-width="1.1"/><rect x="140.64" y="0.00" width="11.72" height="11.72" fill="#B7B7B7" stroke="#111" stroke-width="1.1"/><rect x="152.36" y="0.00" width="11.72" height="11.72" fill="#ACACAC" stroke="#111" stroke-width="1.1"/><rect x="164.08" y="0.00" width="11.72" height="11.72" fill="#A0A0A0" stroke="#111" stroke-width="1.1"/><rect x="175.80" y="0.00" width="11.72" height="11.72" fill="#959595" stroke="#111" stroke-width="1.1"/><rect x="187.52" y="0.00" width="11.72" height="11.72" fill="#ED1C24" stroke="#111" stroke-width="1.1"/><rect x="199.24" y="0.00" width="11.72" height="11.72" fill="#FFF200" stroke="#111" stroke-width="1.1"/><rect x="210.96" y="0.00" width="11.72" height="11.72" fill="#00A651" stroke="#111" stroke-width="1.1"/><rect x="0.00" y="11.72" width="11.72" height="11.72" fill="#00AEEF" stroke="#111" stroke-width="1.1"/><rect x="11.72" y="11.72" width="11.72" height="11.72" fill="#2E3192" stroke="#111" stroke-width="1.1"/><rect x="23.44" y="11.72" width="11.72" height="11.72" fill="#EC008C" stroke="#111" stroke-width="1.1"/><rect x="35.16" y="11.72" width="11.72" height="11.72" fill="#898989" stroke="#111" stroke-width="1.1"/><rect x="46.88" y="11.72" width="11.72" height="11.72" fill="#7D7D7D" stroke="#111" stroke-width="1.1"/><rect x="58.60" y="11.72" width="11.72" height="11.72" fill="#707070" stroke="#111" stroke-width="1.1"/><rect x="70.32" y="11.72" width="11.72" height="11.72" fill="#646464" stroke="#111" stroke-width="1.1"/><rect x="82.04" y="11.72" width="11.72" height="11.72" fill="#555555" stroke="#111" stroke-width="1.1"/><rect x="93.76" y="11.72" width="11.72" height="11.72" fill="#464646" stroke="#111" stroke-width="1.1"/><rect x="105.48" y="11.72" width="11.72" height="11.72" fill="#363636" stroke="#111" stroke-width="1.1"/><rect x="117.20" y="11.72" width="11.72" height="11.72" fill="#262626" stroke="#111" stroke-width="1.1"/><rect x="128.92" y="11.72" width="11.72" height="11.72" fill="#111111" stroke="#111" stroke-width="1.1"/><rect x="140.64" y="11.72" width="11.72" height="11.72" fill="#000000" stroke="#111" stroke-width="1.1"/><rect x="152.36" y="11.72" width="11.72" height="11.72" fill="#F7977A" stroke="#111" stroke-width="1.1"/><rect x="164.08" y="11.72" width="11.72" height="11.72" fill="#FBAD82" stroke="#111" stroke-width="1.1"/><rect x="175.80" y="11.72" width="11.72" height="11.72" fill="#FDC68A" stroke="#111" stroke-width="1.1"/><rect x="187.52" y="11.72" width="11.72" height="11.72" fill="#FFF79A" stroke="#111" stroke-width="1.1"/><rect x="199.24" y="11.72" width="11.72" height="11.72" fill="#C4DF9B" stroke="#111" stroke-width="1.1"/><rect x="210.96" y="11.72" width="11.72" height="11.72" fill="#A3D39C" stroke="#111" stroke-width="1.1"/><rect x="0.00" y="23.44" width="11.72" height="11.72" fill="#82CA9D" stroke="#111" stroke-width="1.1"/><rect x="11.72" y="23.44" width="11.72" height="11.72" fill="#7BCDC8" stroke="#111" stroke-width="1.1"/><rect x="23.44" y="23.44" width="11.72" height="11.72" fill="#6DCFF6" stroke="#111" stroke-width="1.1"/><rect x="35.16" y="23.44" width="11.72" height="11.72" fill="#7DA7D9" stroke="#111" stroke-width="1.1"/><rect x="46.88" y="23.44" width="11.72" height="11.72" fill="#8493CA" stroke="#111" stroke-width="1.1"/><rect x="58.60" y="23.44" width="11.72" height="11.72" fill="#8882BE" stroke="#111" stroke-width="1.1"/><rect x="70.32" y="23.44" width="11.72" height="11.72" fill="#A187BE" stroke="#111" stroke-width="1.1"/><rect x="82.04" y="23.44" width="11.72" height="11.72" fill="#BC8DBF" stroke="#111" stroke-width="1.1"/><rect x="93.76" y="23.44" width="11.72" height="11.72" fill="#F49AC1" stroke="#111" stroke-width="1.1"/><rect x="105.48" y="23.44" width="11.72" height="11.72" fill="#F5989D" stroke="#111" stroke-width="1.1"/><rect x="117.20" y="23.44" width="11.72" height="11.72" fill="#F26C4F" stroke="#111" stroke-width="1.1"/><rect x="128.92" y="23.44" width="11.72" height="11.72" fill="#F68E56" stroke="#111" stroke-width="1.1"/><rect x="140.64" y="23.44" width="11.72" height="11.72" fill="#FBAF5D" stroke="#111" stroke-width="1.1"/><rect x="152.36" y="23.44" width="11.72" height="11.72" fill="#FFF467" stroke="#111" stroke-width="1.1"/><rect x="164.08" y="23.44" width="11.72" height="11.72" fill="#ACD372" stroke="#111" stroke-width="1.1"/><rect x="175.80" y="23.44" width="11.72" height="11.72" fill="#7CC576" stroke="#111" stroke-width="1.1"/><rect x="187.52" y="23.44" width="11.72" height="11.72" fill="#3BB878" stroke="#111" stroke-width="1.1"/><rect x="199.24" y="23.44" width="11.72" height="11.72" fill="#1ABBB4" stroke="#111" stroke-width="1.1"/><rect x="210.96" y="23.44" width="11.72" height="11.72" fill="#00BFF3" stroke="#111" stroke-width="1.1"/><rect x="0.00" y="35.16" width="11.72" height="11.72" fill="#438CCA" stroke="#111" stroke-width="1.1"/><rect x="11.72" y="35.16" width="11.72" height="11.72" fill="#5574B9" stroke="#111" stroke-width="1.1"/><rect x="23.44" y="35.16" width="11.72" height="11.72" fill="#605CA8" stroke="#111" stroke-width="1.1"/><rect x="35.16" y="35.16" width="11.72" height="11.72" fill="#855FA8" stroke="#111" stroke-width="1.1"/><rect x="46.88" y="35.16" width="11.72" height="11.72" fill="#A763A8" stroke="#111" stroke-width="1.1"/><rect x="58.60" y="35.16" width="11.72" height="11.72" fill="#F06EA9" stroke="#111" stroke-width="1.1"/><rect x="70.32" y="35.16" width="11.72" height="11.72" fill="#F26D7D" stroke="#111" stroke-width="1.1"/><rect x="82.04" y="35.16" width="11.72" height="11.72" fill="#ED1C24" stroke="#111" stroke-width="1.1"/><rect x="93.76" y="35.16" width="11.72" height="11.72" fill="#F26522" stroke="#111" stroke-width="1.1"/><rect x="105.48" y="35.16" width="11.72" height="11.72" fill="#F7941D" stroke="#111" stroke-width="1.1"/><rect x="117.20" y="35.16" width="11.72" height="11.72" fill="#FFF200" stroke="#111" stroke-width="1.1"/><rect x="128.92" y="35.16" width="11.72" height="11.72" fill="#8DC63F" stroke="#111" stroke-width="1.1"/><rect x="140.64" y="35.16" width="11.72" height="11.72" fill="#39B54A" stroke="#111" stroke-width="1.1"/><rect x="152.36" y="35.16" width="11.72" height="11.72" fill="#00A651" stroke="#111" stroke-width="1.1"/><rect x="164.08" y="35.16" width="11.72" height="11.72" fill="#00A99D" stroke="#111" stroke-width="1.1"/><rect x="175.80" y="35.16" width="11.72" height="11.72" fill="#00AEEF" stroke="#111" stroke-width="1.1"/><rect x="187.52" y="35.16" width="11.72" height="11.72" fill="#0072BC" stroke="#111" stroke-width="1.1"/><rect x="199.24" y="35.16" width="11.72" height="11.72" fill="#0054A6" stroke="#111" stroke-width="1.1"/><rect x="210.96" y="35.16" width="11.72" height="11.72" fill="#2E3192" stroke="#111" stroke-width="1.1"/><rect x="0.00" y="46.88" width="11.72" height="11.72" fill="#662D91" stroke="#111" stroke-width="1.1"/><rect x="11.72" y="46.88" width="11.72" height="11.72" fill="#92278F" stroke="#111" stroke-width="1.1"/><rect x="23.44" y="46.88" width="11.72" height="11.72" fill="#EC008C" stroke="#111" stroke-width="1.1"/><rect x="35.16" y="46.88" width="11.72" height="11.72" fill="#ED145B" stroke="#111" stroke-width="1.1"/><rect x="46.88" y="46.88" width="11.72" height="11.72" fill="#9E0B0F" stroke="#111" stroke-width="1.1"/><rect x="58.60" y="46.88" width="11.72" height="11.72" fill="#A0410D" stroke="#111" stroke-width="1.1"/><rect x="70.32" y="46.88" width="11.72" height="11.72" fill="#A36209" stroke="#111" stroke-width="1.1"/><rect x="82.04" y="46.88" width="11.72" height="11.72" fill="#ABA000" stroke="#111" stroke-width="1.1"/><rect x="93.76" y="46.88" width="11.72" height="11.72" fill="#598527" stroke="#111" stroke-width="1.1"/><rect x="105.48" y="46.88" width="11.72" height="11.72" fill="#197B30" stroke="#111" stroke-width="1.1"/><rect x="117.20" y="46.88" width="11.72" height="11.72" fill="#007236" stroke="#111" stroke-width="1.1"/><rect x="128.92" y="46.88" width="11.72" height="11.72" fill="#00746B" stroke="#111" stroke-width="1.1"/><rect x="140.64" y="46.88" width="11.72" height="11.72" fill="#0076A3" stroke="#111" stroke-width="1.1"/><rect x="152.36" y="46.88" width="11.72" height="11.72" fill="#004B80" stroke="#111" stroke-width="1.1"/><rect x="164.08" y="46.88" width="11.72" height="11.72" fill="#003471" stroke="#111" stroke-width="1.1"/><rect x="175.80" y="46.88" width="11.72" height="11.72" fill="#1B1464" stroke="#111" stroke-width="1.1"/><rect x="187.52" y="46.88" width="11.72" height="11.72" fill="#440E62" stroke="#111" stroke-width="1.1"/><rect x="199.24" y="46.88" width="11.72" height="11.72" fill="#630460" stroke="#111" stroke-width="1.1"/><rect x="210.96" y="46.88" width="11.72" height="11.72" fill="#9E005D" stroke="#111" stroke-width="1.1"/><rect x="0.00" y="58.60" width="11.72" height="11.72" fill="#9E0039" stroke="#111" stroke-width="1.1"/><rect x="11.72" y="58.60" width="11.72" height="11.72" fill="#790000" stroke="#111" stroke-width="1.1"/><rect x="23.44" y="58.60" width="11.72" height="11.72" fill="#7B2E00" stroke="#111" stroke-width="1.1"/><rect x="35.16" y="58.60" width="11.72" height="11.72" fill="#7D4900" stroke="#111" stroke-width="1.1"/><rect x="46.88" y="58.60" width="11.72" height="11.72" fill="#827B00" stroke="#111" stroke-width="1.1"/><rect x="58.60" y="58.60" width="11.72" height="11.72" fill="#406618" stroke="#111" stroke-width="1.1"/><rect x="70.32" y="58.60" width="11.72" height="11.72" fill="#005E20" stroke="#111" stroke-width="1.1"/><rect x="82.04" y="58.60" width="11.72" height="11.72" fill="#005826" stroke="#111" stroke-width="1.1"/><rect x="93.76" y="58.60" width="11.72" height="11.72" fill="#005952" stroke="#111" stroke-width="1.1"/><rect x="105.48" y="58.60" width="11.72" height="11.72" fill="#005B7F" stroke="#111" stroke-width="1.1"/><rect x="117.20" y="58.60" width="11.72" height="11.72" fill="#003663" stroke="#111" stroke-width="1.1"/><rect x="128.92" y="58.60" width="11.72" height="11.72" fill="#002157" stroke="#111" stroke-width="1.1"/><rect x="140.64" y="58.60" width="11.72" height="11.72" fill="#0D004C" stroke="#111" stroke-width="1.1"/><rect x="152.36" y="58.60" width="11.72" height="11.72" fill="#32004B" stroke="#111" stroke-width="1.1"/><rect x="164.08" y="58.60" width="11.72" height="11.72" fill="#4B0049" stroke="#111" stroke-width="1.1"/><rect x="175.80" y="58.60" width="11.72" height="11.72" fill="#7B0046" stroke="#111" stroke-width="1.1"/><rect x="187.52" y="58.60" width="11.72" height="11.72" fill="#7A0026" stroke="#111" stroke-width="1.1"/><rect x="199.24" y="58.60" width="11.72" height="11.72" fill="#C7B299" stroke="#111" stroke-width="1.1"/><rect x="210.96" y="58.60" width="11.72" height="11.72" fill="#998675" stroke="#111" stroke-width="1.1"/><rect x="0.00" y="70.32" width="11.72" height="11.72" fill="#736357" stroke="#111" stroke-width="1.1"/><rect x="11.72" y="70.32" width="11.72" height="11.72" fill="#534741" stroke="#111" stroke-width="1.1"/><rect x="23.44" y="70.32" width="11.72" height="11.72" fill="#362F2D" stroke="#111" stroke-width="1.1"/><rect x="35.16" y="70.32" width="11.72" height="11.72" fill="#C69C6D" stroke="#111" stroke-width="1.1"/><rect x="46.88" y="70.32" width="11.72" height="11.72" fill="#A67C52" stroke="#111" stroke-width="1.1"/><rect x="58.60" y="70.32" width="11.72" height="11.72" fill="#8C6239" stroke="#111" stroke-width="1.1"/><rect x="70.32" y="70.32" width="11.72" height="11.72" fill="#754C24" stroke="#111" stroke-width="1.1"/><rect x="82.04" y="70.32" width="11.72" height="11.72" fill="#603913" stroke="#111" stroke-width="1.1"/></svg>
<div class="a" style="left:755px;top:209px;width:224px;height:1px;background:#a8a8a8"></div>
<div class="a" style="left:979px;top:115px;width:14px;height:95px;background:#fcfcfc"></div>
<svg style="left:981px;top:120px" width="10" height="7"><path d="M1 6l4-4l4 4" stroke="#d4d4d4" stroke-width="2" fill="none"/></svg>
<svg style="left:981px;top:200px" width="10" height="7"><path d="M1 1l4 4l4-4" stroke="#d4d4d4" stroke-width="2" fill="none"/></svg>
<svg style="left:934px;top:213px" width="10" height="10"><rect x="0.5" y="0.5" width="9" height="9" fill="#f4f4f4" stroke="#333"/><rect x="3" y="4" width="6" height="5" fill="#444"/></svg>
<svg style="left:962px;top:212px" width="10" height="11"><path d="M0 2h10M3 1h4" stroke="#888" stroke-width="1.4"/><path d="M1.5 3v7h7v-7M4 4v5M6 4v5" stroke="#999" fill="none"/></svg>
<svg style="left:983px;top:214px" width="10" height="10"><path d="M9 1v1M7 3v1M9 3v1M5 5v1M7 5v1M9 5v1M3 7v1M5 7v1M7 7v1M9 7v1" stroke="#aaa" stroke-width="1"/></svg>
<div class="a" style="left:754px;top:227px;width:242px;height:2px;background:#2e2e2e"></div>
<div class="a" style="left:754px;top:229px;width:242px;height:16px;background:linear-gradient(#9e9e9e,#8a8a8a)"></div>
<div class="a" style="left:754px;top:229px;width:36px;height:16px;background:linear-gradient(#e8e8e8,#d6d6d6);border-right:1px solid #8a8a8a"></div>
<div class="t" style="left:761px;top:232px;font-size:11px;color:#222">调整</div>
<div class="a" style="left:790px;top:229px;width:36px;height:16px;border-right:1px solid #7a7a7a;background:linear-gradient(#9c9c9c,#8e8e8e)"></div>
<div class="t" style="left:797px;top:232px;font-size:11px;color:#4e4e4e">蒙版</div>
<svg style="left:978px;top:234px" width="14" height="9"><path d="M0 3h5l-2.5 3z" fill="#222"/><path d="M6 1.5h8M6 3.5h8M6 5.5h8M6 7.5h8" stroke="#4a4a4a" stroke-width="1" stroke-dasharray="8" shape-rendering="crispEdges"/></svg>
<div class="a" style="left:754px;top:245px;width:242px;height:4px;background:#d6d6d6"></div>
<div class="a" style="left:754px;top:249px;width:242px;height:3px;background:#2e2e2e"></div>
<div class="a" style="left:754px;top:252px;width:242px;height:353px;background:#d6d6d6"></div>
<div class="a" style="left:754px;top:252px;width:242px;height:16px;background:linear-gradient(#9e9e9e,#8a8a8a)"></div>
<div class="a" style="left:754px;top:252px;width:36px;height:16px;background:linear-gradient(#e8e8e8,#d6d6d6);border-right:1px solid #8a8a8a"></div>
<div class="t" style="left:761px;top:255px;font-size:11px;color:#222">图层</div>
<div class="a" style="left:790px;top:252px;width:36px;height:16px;border-right:1px solid #7a7a7a;background:linear-gradient(#9c9c9c,#8e8e8e)"></div>
<div class="t" style="left:797px;top:255px;font-size:11px;color:#4e4e4e">通道</div>
<div class="a" style="left:826px;top:252px;width:36px;height:16px;border-right:1px solid #7a7a7a;background:linear-gradient(#9c9c9c,#8e8e8e)"></div>
<div class="t" style="left:833px;top:255px;font-size:11px;color:#4e4e4e">路径</div>
<svg style="left:978px;top:257px" width="14" height="9"><path d="M0 3h5l-2.5 3z" fill="#222"/><path d="M6 1.5h8M6 3.5h8M6 5.5h8M6 7.5h8" stroke="#4a4a4a" stroke-width="1" stroke-dasharray="8" shape-rendering="crispEdges"/></svg>
<div class="a" style="left:758px;top:272px;width:119px;height:21px;background:#fff;border:1px solid #a0b0c8"></div>
<div class="t" style="left:764px;top:276px;font-size:12.5px;color:#111">正常</div>
<div class="a" style="left:861px;top:273px;width:15px;height:19px;background:linear-gradient(#dde8f8,#bccdf0)"></div>
<svg style="left:864px;top:279px" width="10" height="7"><path d="M1 1l4 4l4-4" stroke="#2a4a80" stroke-width="2" fill="none"/></svg>
<div class="t" style="left:880px;top:277px;font-size:11.9px;color:#111">不透明度:</div>
<div class="a" style="left:934px;top:272px;width:57px;height:20px;background:#fff;border:1px solid #a8b8d0"></div>
<div class="t" style="left:938px;top:277px;font-size:11px;color:#111">100%</div>
<div class="a" style="left:975px;top:273px;width:15px;height:18px;background:linear-gradient(#dde8f8,#bccdf0)"></div>
<svg style="left:982px;top:279px" width="5" height="7"><path d="M1 0.5l3 3l-3 3" stroke="#2a4a80" stroke-width="1.5" fill="none"/></svg>
<div class="a" style="left:756px;top:294px;width:238px;height:1px;background:#b8b8b8"></div>
<div class="t" style="left:761px;top:303px;font-size:11.8px;color:#111">锁定:</div>
<svg style="left:795px;top:302px" width="12" height="12"><rect x="0.5" y="0.5" width="11" height="11" fill="#fff" stroke="#444"/><path d="M1 1h5v5h5v5h-5v-5h-5z" fill="#ccc"/></svg>
<svg style="left:811px;top:301px" width="14" height="14"><path d="M13 1l-8 8" stroke="#444" stroke-width="1.6"/><path d="M1 13c2 0 4-1 5-3l-2-2c-2 1-3 3-3 5z" fill="#333"/></svg>
<svg style="left:829px;top:301px" width="13" height="14"><path d="M6.5 1v12M1 7h11" stroke="#333" stroke-width="1.4"/><path d="M6.5 0l-2.5 3h5zM6.5 14l-2.5-3h5zM0 7l3-2.5v5zM13 7l-3-2.5v5z" fill="#333"/></svg>
<svg style="left:849px;top:301px" width="10" height="13"><path d="M2.5 6v-2.5a2.5 2.5 0 0 1 5 0v2.5" stroke="#444" stroke-width="1.5" fill="none"/><rect x="0.5" y="6" width="9" height="7" rx="1" fill="#333"/></svg>
<div class="t" style="left:903px;top:303px;font-size:11.8px;color:#111">填充:</div>
<div class="a" style="left:934px;top:298px;width:57px;height:20px;background:#fff;border:1px solid #a8b8d0"></div>
<div class="t" style="left:938px;top:303px;font-size:11px;color:#111">100%</div>
<div class="a" style="left:975px;top:299px;width:15px;height:18px;background:linear-gradient(#dde8f8,#bccdf0)"></div>
<svg style="left:982px;top:305px" width="5" height="7"><path d="M1 0.5l3 3l-3 3" stroke="#2a4a80" stroke-width="1.5" fill="none"/></svg>
<div class="a" style="left:756px;top:320px;width:238px;height:1px;background:#b0b0b0"></div>
<div class="a" style="left:755px;top:322px;width:224px;height:31px;background:#d6d6d6;border-bottom:1px solid #a6a6a6"></div>
<div class="a" style="left:777px;top:322px;width:1px;height:31px;background:#a6a6a6"></div>
<div class="a" style="left:781px;top:325px;width:32px;height:25px;border:2px solid #383838;background-color:#fff;background-image:linear-gradient(45deg,#d4d4d4 25%,transparent 25%,transparent 75%,#d4d4d4 75%),linear-gradient(45deg,#d4d4d4 25%,transparent 25%,transparent 75%,#d4d4d4 75%);background-size:8px 8px;background-position:0 0,4px 4px"></div>
<svg style="left:759px;top:328px" width="16" height="15"><rect x="0" y="0" width="16" height="15" fill="#e2e2e2"/><path d="M0.5 15v-14.5h15.5" stroke="#8a8a8a" fill="none"/><path d="M2.5 7.5c2-4 9-4.5 11 0c-2 3.5-9 4-11 0z" fill="#555"/><ellipse cx="8" cy="7" rx="3" ry="2.6" fill="#111"/><circle cx="7" cy="6.2" r="0.9" fill="#ddd"/><path d="M3 10c3 1.5 7 1.5 10-1" stroke="#444" stroke-width="1" fill="none"/></svg>
<div class="t" style="left:820px;top:333px;font-size:11px;color:#111">图层 6 副本 6</div>
<div class="a" style="left:755px;top:353px;width:224px;height:31px;background:#d6d6d6;border-bottom:1px solid #a6a6a6"></div>
<div class="a" style="left:777px;top:353px;width:1px;height:31px;background:#a6a6a6"></div>
<div class="a" style="left:781px;top:356px;width:32px;height:25px;border:2px solid #383838;background-color:#fff;background-image:linear-gradient(45deg,#d4d4d4 25%,transparent 25%,transparent 75%,#d4d4d4 75%),linear-gradient(45deg,#d4d4d4 25%,transparent 25%,transparent 75%,#d4d4d4 75%);background-size:8px 8px;background-position:0 0,4px 4px"></div>
<svg style="left:759px;top:359px" width="16" height="15"><rect x="0" y="0" width="16" height="15" fill="#e2e2e2"/><path d="M0.5 15v-14.5h15.5" stroke="#8a8a8a" fill="none"/><path d="M2.5 7.5c2-4 9-4.5 11 0c-2 3.5-9 4-11 0z" fill="#555"/><ellipse cx="8" cy="7" rx="3" ry="2.6" fill="#111"/><circle cx="7" cy="6.2" r="0.9" fill="#ddd"/><path d="M3 10c3 1.5 7 1.5 10-1" stroke="#444" stroke-width="1" fill="none"/></svg>
<div class="t" style="left:820px;top:364px;font-size:11px;color:#111">图层 6 副本 5</div>
<div class="a" style="left:755px;top:384px;width:224px;height:31px;background:#d6d6d6;border-bottom:1px solid #a6a6a6"></div>
<div class="a" style="left:777px;top:384px;width:1px;height:31px;background:#a6a6a6"></div>
<div class="a" style="left:781px;top:387px;width:32px;height:25px;border:2px solid #383838;background-color:#fff;background-image:linear-gradient(45deg,#d4d4d4 25%,transparent 25%,transparent 75%,#d4d4d4 75%),linear-gradient(45deg,#d4d4d4 25%,transparent 25%,transparent 75%,#d4d4d4 75%);background-size:8px 8px;background-position:0 0,4px 4px"></div>
<svg style="left:759px;top:390px" width="16" height="15"><rect x="0" y="0" width="16" height="15" fill="#e2e2e2"/><path d="M0.5 15v-14.5h15.5" stroke="#8a8a8a" fill="none"/><path d="M2.5 7.5c2-4 9-4.5 11 0c-2 3.5-9 4-11 0z" fill="#555"/><ellipse cx="8" cy="7" rx="3" ry="2.6" fill="#111"/><circle cx="7" cy="6.2" r="0.9" fill="#ddd"/><path d="M3 10c3 1.5 7 1.5 10-1" stroke="#444" stroke-width="1" fill="none"/></svg>
<div class="t" style="left:820px;top:395px;font-size:11px;color:#111">图层 6 副本 4</div>
<div class="a" style="left:755px;top:415px;width:224px;height:32px;background:#d6d6d6;border-bottom:1px solid #a6a6a6"></div>
<div class="a" style="left:777px;top:415px;width:1px;height:31px;background:#a6a6a6"></div>
<div class="a" style="left:781px;top:418px;width:32px;height:25px;border:2px solid #383838;background-color:#fff;background-image:linear-gradient(45deg,#d4d4d4 25%,transparent 25%,transparent 75%,#d4d4d4 75%),linear-gradient(45deg,#d4d4d4 25%,transparent 25%,transparent 75%,#d4d4d4 75%);background-size:8px 8px;background-position:0 0,4px 4px"></div>
<svg style="left:759px;top:421px" width="16" height="15"><rect x="0" y="0" width="16" height="15" fill="#e2e2e2"/><path d="M0.5 15v-14.5h15.5" stroke="#8a8a8a" fill="none"/><path d="M2.5 7.5c2-4 9-4.5 11 0c-2 3.5-9 4-11 0z" fill="#555"/><ellipse cx="8" cy="7" rx="3" ry="2.6" fill="#111"/><circle cx="7" cy="6.2" r="0.9" fill="#ddd"/><path d="M3 10c3 1.5 7 1.5 10-1" stroke="#444" stroke-width="1" fill="none"/></svg>
<div class="t" style="left:820px;top:426px;font-size:11px;color:#111">图层 6 副本 3</div>
<div class="a" style="left:755px;top:447px;width:224px;height:31px;background:#d6d6d6;border-bottom:1px solid #a6a6a6"></div>
<div class="a" style="left:777px;top:447px;width:1px;height:31px;background:#a6a6a6"></div>
<div class="a" style="left:781px;top:450px;width:32px;height:25px;border:2px solid #383838;background-color:#fff;background-image:linear-gradient(45deg,#d4d4d4 25%,transparent 25%,transparent 75%,#d4d4d4 75%),linear-gradient(45deg,#d4d4d4 25%,transparent 25%,transparent 75%,#d4d4d4 75%);background-size:8px 8px;background-position:0 0,4px 4px"></div>
<svg style="left:759px;top:453px" width="16" height="15"><rect x="0" y="0" width="16" height="15" fill="#e2e2e2"/><path d="M0.5 15v-14.5h15.5" stroke="#8a8a8a" fill="none"/><path d="M2.5 7.5c2-4 9-4.5 11 0c-2 3.5-9 4-11 0z" fill="#555"/><ellipse cx="8" cy="7" rx="3" ry="2.6" fill="#111"/><circle cx="7" cy="6.2" r="0.9" fill="#ddd"/><path d="M3 10c3 1.5 7 1.5 10-1" stroke="#444" stroke-width="1" fill="none"/></svg>
<div class="t" style="left:820px;top:458px;font-size:11px;color:#111">图层 6 副本 2</div>
<div class="a" style="left:755px;top:478px;width:224px;height:31px;background:#d6d6d6;border-bottom:1px solid #a6a6a6"></div>
<div class="a" style="left:777px;top:478px;width:1px;height:31px;background:#a6a6a6"></div>
<div class="a" style="left:781px;top:481px;width:32px;height:25px;border:2px solid #383838;background-color:#fff;background-image:linear-gradient(45deg,#d4d4d4 25%,transparent 25%,transparent 75%,#d4d4d4 75%),linear-gradient(45deg,#d4d4d4 25%,transparent 25%,transparent 75%,#d4d4d4 75%);background-size:8px 8px;background-position:0 0,4px 4px"></div>
<svg style="left:759px;top:484px" width="16" height="15"><rect x="0" y="0" width="16" height="15" fill="#e2e2e2"/><path d="M0.5 15v-14.5h15.5" stroke="#8a8a8a" fill="none"/><path d="M2.5 7.5c2-4 9-4.5 11 0c-2 3.5-9 4-11 0z" fill="#555"/><ellipse cx="8" cy="7" rx="3" ry="2.6" fill="#111"/><circle cx="7" cy="6.2" r="0.9" fill="#ddd"/><path d="M3 10c3 1.5 7 1.5 10-1" stroke="#444" stroke-width="1" fill="none"/></svg>
<div class="t" style="left:820px;top:489px;font-size:11px;color:#111">图层 6 副本</div>
<div class="a" style="left:755px;top:509px;width:224px;height:31px;background:#d6d6d6;border-bottom:1px solid #a6a6a6"></div>
<div class="a" style="left:777px;top:509px;width:1px;height:31px;background:#a6a6a6"></div>
<div class="a" style="left:814px;top:509px;width:165px;height:30px;background:#3068c8"></div>
<div class="a" style="left:779px;top:510px;width:36px;height:29px;border:1px solid #1a3870;box-shadow:inset 0 0 0 1px #e8eef8;background:#d6d6d6"></div>
<div class="a" style="left:781px;top:512px;width:32px;height:25px;border:2px solid #383838;background-color:#fff;background-image:linear-gradient(45deg,#d4d4d4 25%,transparent 25%,transparent 75%,#d4d4d4 75%),linear-gradient(45deg,#d4d4d4 25%,transparent 25%,transparent 75%,#d4d4d4 75%);background-size:8px 8px;background-position:0 0,4px 4px"></div>
<svg style="left:759px;top:515px" width="16" height="15"><rect x="0" y="0" width="16" height="15" fill="#e2e2e2"/><path d="M0.5 15v-14.5h15.5" stroke="#8a8a8a" fill="none"/><path d="M2.5 7.5c2-4 9-4.5 11 0c-2 3.5-9 4-11 0z" fill="#555"/><ellipse cx="8" cy="7" rx="3" ry="2.6" fill="#111"/><circle cx="7" cy="6.2" r="0.9" fill="#ddd"/><path d="M3 10c3 1.5 7 1.5 10-1" stroke="#444" stroke-width="1" fill="none"/></svg>
<div class="t" style="left:820px;top:520px;font-size:11px;color:#fff">图层 6 副本 12</div>
<div class="a" style="left:755px;top:540px;width:224px;height:32px;background:#d6d6d6;border-bottom:1px solid #a6a6a6"></div>
<div class="a" style="left:777px;top:540px;width:1px;height:31px;background:#a6a6a6"></div>
<div class="a" style="left:781px;top:543px;width:32px;height:25px;border:2px solid #383838;background-color:#fff;background-image:linear-gradient(45deg,#d4d4d4 25%,transparent 25%,transparent 75%,#d4d4d4 75%),linear-gradient(45deg,#d4d4d4 25%,transparent 25%,transparent 75%,#d4d4d4 75%);background-size:8px 8px;background-position:0 0,4px 4px"></div>
<svg style="left:759px;top:546px" width="16" height="15"><rect x="0" y="0" width="16" height="15" fill="#e2e2e2"/><path d="M0.5 15v-14.5h15.5" stroke="#8a8a8a" fill="none"/><path d="M2.5 7.5c2-4 9-4.5 11 0c-2 3.5-9 4-11 0z" fill="#555"/><ellipse cx="8" cy="7" rx="3" ry="2.6" fill="#111"/><circle cx="7" cy="6.2" r="0.9" fill="#ddd"/><path d="M3 10c3 1.5 7 1.5 10-1" stroke="#444" stroke-width="1" fill="none"/></svg>
<div class="t" style="left:820px;top:551px;font-size:11px;color:#111">图层 6 副本 11</div>
<div class="a" style="left:755px;top:572px;width:224px;height:31px;background:#d6d6d6;border-bottom:1px solid #a6a6a6"></div>
<div class="a" style="left:777px;top:572px;width:1px;height:31px;background:#a6a6a6"></div>
<div class="a" style="left:781px;top:575px;width:32px;height:25px;border:2px solid #383838;background-color:#fff;background-image:linear-gradient(45deg,#d4d4d4 25%,transparent 25%,transparent 75%,#d4d4d4 75%),linear-gradient(45deg,#d4d4d4 25%,transparent 25%,transparent 75%,#d4d4d4 75%);background-size:8px 8px;background-position:0 0,4px 4px"></div>
<svg style="left:759px;top:578px" width="16" height="15"><rect x="0" y="0" width="16" height="15" fill="#e2e2e2"/><path d="M0.5 15v-14.5h15.5" stroke="#8a8a8a" fill="none"/><path d="M2.5 7.5c2-4 9-4.5 11 0c-2 3.5-9 4-11 0z" fill="#555"/><ellipse cx="8" cy="7" rx="3" ry="2.6" fill="#111"/><circle cx="7" cy="6.2" r="0.9" fill="#ddd"/><path d="M3 10c3 1.5 7 1.5 10-1" stroke="#444" stroke-width="1" fill="none"/></svg>
<div class="t" style="left:820px;top:583px;font-size:11px;color:#111">图层 6 副本 10</div>
<div class="a" style="left:979px;top:321px;width:14px;height:284px;background:#fafafa"></div>
<div class="a" style="left:979px;top:322px;width:14px;height:16px;background:linear-gradient(#e8f0fc,#c8d8f4);border:1px solid #b0c4e8"></div>
<svg style="left:981px;top:327px" width="10" height="6"><path d="M1 5l4-4l4 4" stroke="#2a4a80" stroke-width="2" fill="none"/></svg>
<div class="a" style="left:979px;top:338px;width:14px;height:217px;background:linear-gradient(90deg,#bccdf4,#c8d8f8);border:1px solid #a8bce4"></div>
</body></html>
